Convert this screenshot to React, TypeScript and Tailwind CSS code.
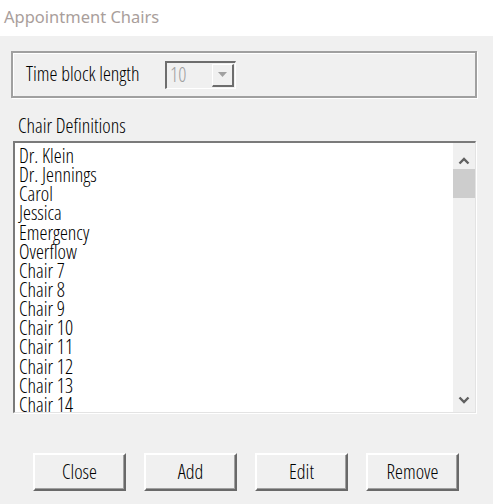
import React from 'react';

const chairs = [
  'Dr. Klein',
  'Dr. Jennings',
  'Carol',
  'Jessica',
  'Emergency',
  'Overflow',
  'Chair 7',
  'Chair 8',
  'Chair 9',
  'Chair 10',
  'Chair 11',
  'Chair 12',
  'Chair 13',
  'Chair 14',
];

function Chevron({ up }: { up?: boolean }) {
  return (
    <svg width="12" height="8" viewBox="0 0 12 8">
      <polyline
        points={up ? '1.5,6.5 6,2 10.5,6.5' : '1.5,1.5 6,6 10.5,1.5'}
        fill="none"
        stroke="#606060"
        strokeWidth="2.4"
      />
    </svg>
  );
}

function WinButton({ label }: { label: string }) {
  return (
    <button className="w-[93px] h-[38px] bg-[#f0f0f0] border-t-2 border-l-2 border-t-white border-l-white border-b-2 border-r-2 border-b-[#696969] border-r-[#696969] shadow-[inset_-1px_-1px_0_#a0a0a0] text-[20px] leading-none text-black flex items-center justify-center pb-[1px]">
      {label}
    </button>
  );
}

export default function App() {
  return (
    <div className="w-[493px] h-[504px] flex flex-col bg-[#f0f0f0] font-['Open_Sans',sans-serif] font-[350] [font-stretch:condensed] overflow-hidden">
      <div className="h-[36px] bg-white pl-[4px] pt-[5px] text-[16.5px] font-normal text-[#a99e9b] font-['Noto_Sans','Open_Sans',sans-serif] [font-stretch:normal] shrink-0">
        Appointment Chairs
      </div>

      <div className="flex flex-col pl-[11px] pr-[16px]">
        <div className="mt-[15px] h-[47px] border-2 border-[#a0a0a0] shadow-[1px_1px_0_#fff,inset_1px_1px_0_#fff] flex items-center pl-[13px]">
          <span className="w-[122px] text-[20px] text-black leading-none pb-[2px] whitespace-nowrap">Time block length</span>
          <div className="ml-[17px] w-[71px] h-[28px] flex items-stretch border-t-2 border-l-2 border-t-[#6d6d6d] border-l-[#6d6d6d] border-b border-r border-b-white border-r-white bg-[#f0f0f0]">
            <span className="flex-1 pl-[3px] text-[20px] text-[#a0a0a0] leading-[23px]">10</span>
            <div className="w-[22px] my-[1px] mr-[1px] flex items-center justify-center border-b-2 border-r-2 border-b-[#6d6d6d] border-r-[#6d6d6d] border-t border-l border-t-white border-l-white">
              <svg width="9" height="5" viewBox="0 0 9 5">
                <polygon points="0,0 9,0 4.5,5" fill="#a0a0a0" />
              </svg>
            </div>
          </div>
        </div>

        <div className="mt-[17px] pl-[7px] text-[20px] leading-[22px] text-black">Chair Definitions</div>

        <div className="mt-[4px] ml-[2px] h-[272px] w-[463px] flex bg-white border-t-2 border-l-2 border-t-[#7a7a7a] border-l-[#7a7a7a] border-b border-r border-b-[#e3e3e3] border-r-[#e3e3e3] shadow-[1px_1px_0_#fff]">
          <div className="flex-1 pl-[4px] pt-[3px] overflow-hidden">
            {chairs.map(c => (
              <div key={c} className="h-[19.15px] leading-[19px] text-[20px] text-black whitespace-nowrap">{c}</div>
            ))}
          </div>
          <div className="w-[22px] bg-[#f0f0f0] flex flex-col items-center">
            <div className="h-[26px] flex items-center justify-center pt-[10px]">
              <Chevron up />
            </div>
            <div className="w-full h-[29px] bg-[#cdcdcd]" />
            <div className="flex-1" />
            <div className="h-[24px] flex items-center justify-center">
              <Chevron />
            </div>
          </div>
        </div>
      </div>

      <div className="mt-[40px] pl-[33px] flex gap-[18px]">
        <WinButton label="Close" />
        <WinButton label="Add" />
        <WinButton label="Edit" />
        <WinButton label="Remove" />
      </div>
    </div>
  );
}
